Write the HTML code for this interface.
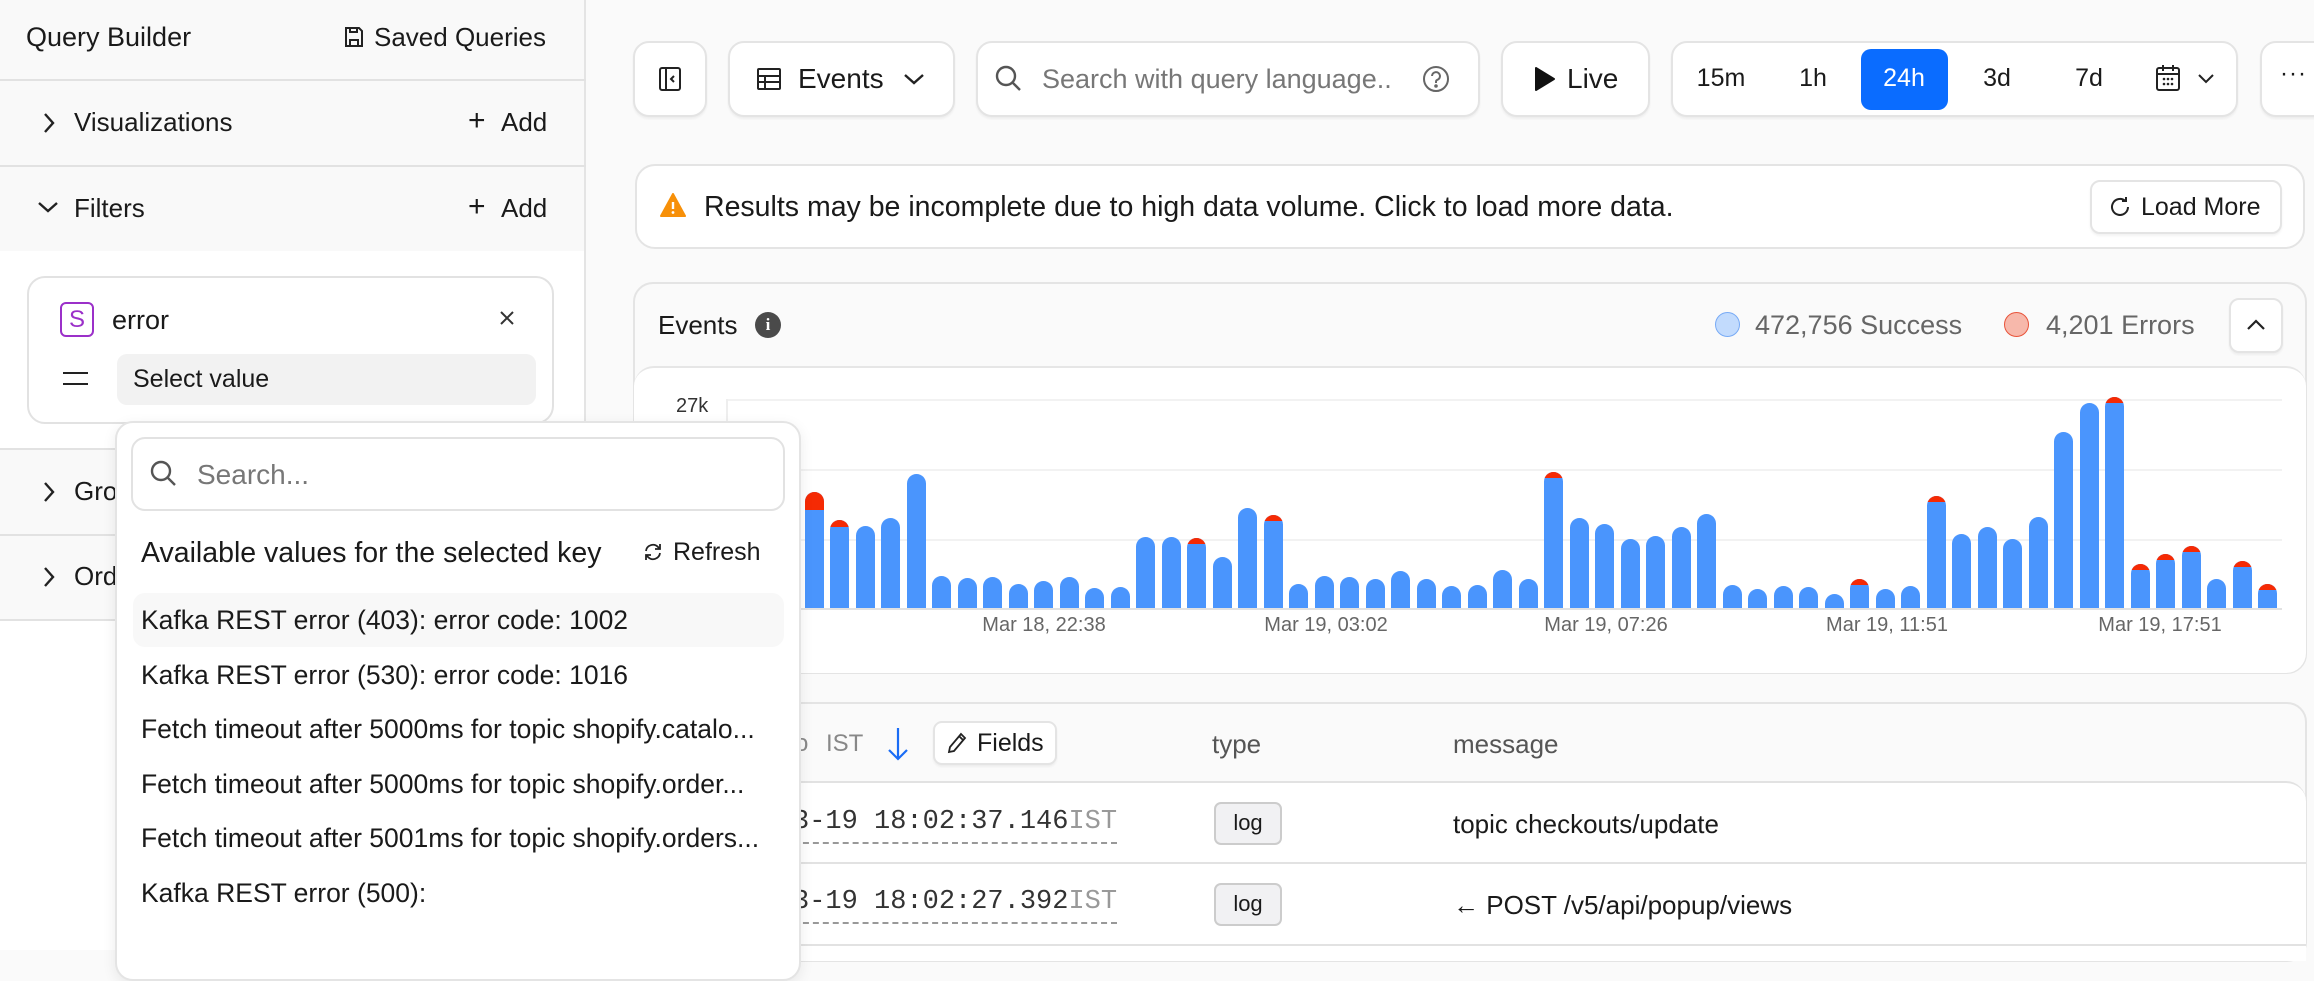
<!DOCTYPE html>
<html><head><meta charset="utf-8">
<style>
*{box-sizing:border-box;margin:0;padding:0}
body{width:2314px;height:950px;overflow:hidden;background:#fafafa;font-family:"Liberation Sans",sans-serif;color:#1a1a1a;position:relative}
.a{position:absolute}
.btn{position:absolute;background:#fff;border:2px solid #e4e4e4;border-radius:16px;box-shadow:0 2px 2px rgba(0,0,0,.05)}
.t{position:absolute;white-space:nowrap;line-height:1}
.hl{position:absolute;left:0;width:586px;height:2px;background:#e2e2e2}
.b{position:absolute;width:19px;background:#4a95fd;border-radius:10px 10px 0 0;overflow:hidden}
.b i{position:absolute;left:0;top:0;width:100%;background:#f52a04}
.xl{position:absolute;top:614px;font-size:20px;color:#666;transform:translateX(-50%);white-space:nowrap}
.mono{font-family:"Liberation Mono",monospace}
</style></head><body>

<!-- Sidebar -->
<div class="a" style="left:0;top:0;width:586px;height:950px;background:#fff;border-right:2px solid #e4e4e4"></div>
<div class="a" style="left:0;top:0;width:584px;height:251px;background:#f9f9f9"></div>
<div class="a" style="left:0;top:449px;width:584px;height:171px;background:#f9f9f9"></div>
<div class="hl" style="top:79px"></div>
<div class="hl" style="top:165px"></div>
<div class="hl" style="top:448px"></div>
<div class="hl" style="top:534px"></div>
<div class="hl" style="top:619px"></div>
<div class="t" style="left:26px;top:24px;font-size:27px">Query Builder</div>
<svg class="a" style="left:344px;top:26px" width="20" height="22" viewBox="0 0 20 22" fill="none" stroke="#222" stroke-width="2"><path d="M2 2h13l3 3v15H2z"/><path d="M6 20v-6h8v6M6 2v4h7V2"/></svg>
<div class="t" style="left:374px;top:24px;font-size:26px">Saved Queries</div>
<svg class="a" style="left:42px;top:111px" width="14" height="24" viewBox="0 0 14 24" fill="none" stroke="#222" stroke-width="2.4"><path d="M3 3l8 9-8 9"/></svg>
<div class="t" style="left:74px;top:109px;font-size:26px">Visualizations</div>
<div class="t" style="left:468px;top:106px;font-size:30px;font-weight:300">+</div>
<div class="t" style="left:501px;top:109px;font-size:26px">Add</div>
<svg class="a" style="left:36px;top:200px" width="24" height="14" viewBox="0 0 24 14" fill="none" stroke="#222" stroke-width="2.4"><path d="M3 3l9 8 9-8"/></svg>
<div class="t" style="left:74px;top:195px;font-size:26px">Filters</div>
<div class="t" style="left:468px;top:192px;font-size:30px;font-weight:300">+</div>
<div class="t" style="left:501px;top:195px;font-size:26px">Add</div>
<!-- filter card -->
<div class="a" style="left:27px;top:276px;width:527px;height:148px;border:2px solid #e2e2e2;border-radius:18px;background:#fff"></div>
<div class="a" style="left:60px;top:302px;width:34px;height:35px;border:2px solid #9b30c9;border-radius:6px;color:#9b30c9;font-size:24px;text-align:center;line-height:31px">S</div>
<div class="t" style="left:112px;top:307px;font-size:27px">error</div>
<svg class="a" style="left:499px;top:310px" width="16" height="16" viewBox="0 0 16 16" stroke="#333" stroke-width="2"><path d="M2 2l12 12M14 2L2 14"/></svg>
<div class="a" style="left:63px;top:372px;width:25px;height:2px;background:#222"></div>
<div class="a" style="left:63px;top:383px;width:25px;height:2px;background:#222"></div>
<div class="a" style="left:117px;top:354px;width:419px;height:51px;border-radius:10px;background:#f2f2f2"></div>
<div class="t" style="left:133px;top:367px;font-size:25px">Select value</div>
<svg class="a" style="left:42px;top:480px" width="14" height="24" viewBox="0 0 14 24" fill="none" stroke="#222" stroke-width="2.4"><path d="M3 3l8 9-8 9"/></svg>
<div class="t" style="left:74px;top:478px;font-size:26px">Gro</div>
<svg class="a" style="left:42px;top:565px" width="14" height="24" viewBox="0 0 14 24" fill="none" stroke="#222" stroke-width="2.4"><path d="M3 3l8 9-8 9"/></svg>
<div class="t" style="left:74px;top:563px;font-size:26px">Ord</div>

<!-- Toolbar -->
<div class="btn" style="left:633px;top:41px;width:74px;height:76px"></div>
<svg class="a" style="left:659px;top:67px" width="22" height="24" viewBox="0 0 22 24" fill="none" stroke="#222" stroke-width="2"><rect x="1" y="1" width="20" height="22" rx="2"/><path d="M7 1v22M15 9l-3 3 3 3"/></svg>
<div class="btn" style="left:728px;top:41px;width:227px;height:76px"></div>
<svg class="a" style="left:757px;top:68px" width="24" height="22" viewBox="0 0 24 22" fill="none" stroke="#222" stroke-width="2"><rect x="1" y="1" width="22" height="20" rx="1"/><path d="M1 8h22M1 14h22M8 8v13"/></svg>
<div class="t" style="left:798px;top:65px;font-size:28px">Events</div>
<svg class="a" style="left:902px;top:72px" width="24" height="14" viewBox="0 0 24 14" fill="none" stroke="#222" stroke-width="2.4"><path d="M3 3l9 8 9-8"/></svg>
<div class="btn" style="left:976px;top:41px;width:504px;height:76px"></div>
<svg class="a" style="left:994px;top:64px" width="30" height="30" viewBox="0 0 30 30" fill="none" stroke="#555" stroke-width="2.4"><circle cx="12" cy="12" r="9"/><path d="M19 19l7 7"/></svg>
<div class="t" style="left:1042px;top:66px;font-size:27px;color:#777">Search with query language..</div>
<svg class="a" style="left:1422px;top:65px" width="28" height="28" viewBox="0 0 28 28" fill="none" stroke="#666" stroke-width="2"><circle cx="14" cy="14" r="12"/><path d="M10 11a4 4 0 1 1 5 4c-1 .5-1 1-1 3"/><circle cx="14" cy="21" r=".8" fill="#666"/></svg>
<div class="btn" style="left:1501px;top:41px;width:149px;height:76px"></div>
<svg class="a" style="left:1534px;top:66px" width="22" height="26" viewBox="0 0 22 26"><path d="M2 2l18 11L2 24z" fill="#111" stroke="#111" stroke-width="2" stroke-linejoin="round"/></svg>
<div class="t" style="left:1567px;top:65px;font-size:28px">Live</div>
<div class="btn" style="left:1671px;top:41px;width:567px;height:76px"></div>
<div class="a" style="left:1861px;top:49px;width:87px;height:61px;border-radius:10px;background:#0a6cff"></div>
<div class="t" style="left:1721px;top:66px;font-size:25px;transform:translateX(-50%)">15m</div>
<div class="t" style="left:1813px;top:66px;font-size:25px;transform:translateX(-50%)">1h</div>
<div class="t" style="left:1904px;top:66px;font-size:25px;transform:translateX(-50%);color:#fff">24h</div>
<div class="t" style="left:1997px;top:66px;font-size:25px;transform:translateX(-50%)">3d</div>
<div class="t" style="left:2089px;top:66px;font-size:25px;transform:translateX(-50%)">7d</div>
<svg class="a" style="left:2156px;top:64px" width="24" height="28" viewBox="0 0 24 28" fill="none" stroke="#222" stroke-width="2"><rect x="1" y="4" width="22" height="22" rx="2"/><path d="M1 10h22M7 1v6M17 1v6"/><g fill="#222" stroke="none"><circle cx="8" cy="15" r="1.3"/><circle cx="12" cy="15" r="1.3"/><circle cx="16" cy="15" r="1.3"/><circle cx="8" cy="20" r="1.3"/><circle cx="12" cy="20" r="1.3"/><circle cx="16" cy="20" r="1.3"/></g></svg>
<svg class="a" style="left:2197px;top:73px" width="18" height="11" viewBox="0 0 18 11" fill="none" stroke="#222" stroke-width="2"><path d="M2 2l7 7 7-7"/></svg>
<div class="btn" style="left:2260px;top:41px;width:80px;height:76px"></div>
<div class="t" style="left:2280px;top:62px;font-size:24px;letter-spacing:1px">···</div>

<!-- Alert -->
<div class="btn" style="left:635px;top:164px;width:1670px;height:85px;border-radius:20px;box-shadow:none"></div>
<svg class="a" style="left:660px;top:193px" width="26" height="24" viewBox="0 0 26 24"><path d="M13 1L25 23H1z" fill="#f79009" stroke="#f79009" stroke-width="2" stroke-linejoin="round"/><path d="M13 9v7" stroke="#fff" stroke-width="2.4"/><circle cx="13" cy="19.5" r="1.4" fill="#fff"/></svg>
<div class="t" style="left:704px;top:193px;font-size:28.5px">Results may be incomplete due to high data volume. Click to load more data.</div>
<div class="btn" style="left:2090px;top:180px;width:192px;height:54px;border-radius:10px"></div>
<svg class="a" style="left:2109px;top:196px" width="22" height="22" viewBox="0 0 22 22" fill="none" stroke="#222" stroke-width="2"><path d="M19 11a8 8 0 1 1-3-6.3"/><path d="M17 1v4h-4"/></svg>
<div class="t" style="left:2141px;top:195px;font-size:25px">Load More</div>

<!-- Events card -->
<div class="a" style="left:633px;top:282px;width:1674px;height:392px;border:2px solid #e4e4e4;border-radius:20px;background:#fafafa"></div>
<div class="t" style="left:658px;top:312px;font-size:26px">Events</div>
<div class="a" style="left:755px;top:312px;width:26px;height:26px;border-radius:50%;background:#4a4a4a;color:#fff;font-size:17px;font-weight:bold;text-align:center;line-height:26px;font-family:'Liberation Serif',serif">i</div>
<div class="a" style="left:1715px;top:312px;width:25px;height:25px;border-radius:50%;background:#c2dbfd;border:1.5px solid #77aaf5"></div>
<div class="t" style="left:1755px;top:312px;font-size:27px;color:#666">472,756 Success</div>
<div class="a" style="left:2004px;top:312px;width:25px;height:25px;border-radius:50%;background:#f7b8ab;border:1.5px solid #e8533a"></div>
<div class="t" style="left:2046px;top:312px;font-size:27px;color:#666">4,201 Errors</div>
<div class="btn" style="left:2229px;top:298px;width:54px;height:55px;border-radius:10px"></div>
<svg class="a" style="left:2246px;top:318px" width="20" height="13" viewBox="0 0 20 13" fill="none" stroke="#222" stroke-width="2.2"><path d="M2 11l8-8 8 8"/></svg>
<div class="a" style="left:634px;top:366px;width:1672px;height:307px;border-top:2px solid #e6e6e6;border-radius:20px;background:#fff"></div>
<div class="t" style="left:676px;top:396px;font-size:20px;color:#333">27k</div>
<div class="a" style="left:726px;top:399px;width:1556px;height:2px;background:#f2f2f2"></div>
<div class="a" style="left:726px;top:469px;width:1556px;height:2px;background:#f2f2f2"></div>
<div class="a" style="left:726px;top:539px;width:1556px;height:2px;background:#f2f2f2"></div>
<div class="a" style="left:726px;top:399px;width:2px;height:210px;background:#eee"></div>

<div class="b" style="left:728px;top:540px;height:69px"></div>
<div class="b" style="left:754px;top:530px;height:79px"></div>
<div class="b" style="left:779px;top:520px;height:89px"></div>
<div class="b" style="left:805px;top:492px;height:117px"><i style="height:18px"></i></div>
<div class="b" style="left:830px;top:520px;height:89px"><i style="height:7px"></i></div>
<div class="b" style="left:856px;top:526px;height:83px"></div>
<div class="b" style="left:881px;top:518px;height:91px"></div>
<div class="b" style="left:907px;top:474px;height:135px"></div>
<div class="b" style="left:932px;top:576px;height:33px"></div>
<div class="b" style="left:958px;top:578px;height:31px"></div>
<div class="b" style="left:983px;top:577px;height:32px"></div>
<div class="b" style="left:1009px;top:584px;height:25px"></div>
<div class="b" style="left:1034px;top:581px;height:28px"></div>
<div class="b" style="left:1060px;top:577px;height:32px"></div>
<div class="b" style="left:1085px;top:588px;height:21px"></div>
<div class="b" style="left:1111px;top:587px;height:22px"></div>
<div class="b" style="left:1136px;top:537px;height:72px"></div>
<div class="b" style="left:1162px;top:537px;height:72px"></div>
<div class="b" style="left:1187px;top:538px;height:71px"><i style="height:6px"></i></div>
<div class="b" style="left:1213px;top:557px;height:52px"></div>
<div class="b" style="left:1238px;top:508px;height:101px"></div>
<div class="b" style="left:1264px;top:515px;height:94px"><i style="height:6px"></i></div>
<div class="b" style="left:1289px;top:584px;height:25px"></div>
<div class="b" style="left:1315px;top:576px;height:33px"></div>
<div class="b" style="left:1340px;top:577px;height:32px"></div>
<div class="b" style="left:1366px;top:579px;height:30px"></div>
<div class="b" style="left:1391px;top:571px;height:38px"></div>
<div class="b" style="left:1417px;top:579px;height:30px"></div>
<div class="b" style="left:1442px;top:586px;height:23px"></div>
<div class="b" style="left:1468px;top:585px;height:24px"></div>
<div class="b" style="left:1493px;top:570px;height:39px"></div>
<div class="b" style="left:1519px;top:579px;height:30px"></div>
<div class="b" style="left:1544px;top:472px;height:137px"><i style="height:6px"></i></div>
<div class="b" style="left:1570px;top:518px;height:91px"></div>
<div class="b" style="left:1595px;top:524px;height:85px"></div>
<div class="b" style="left:1621px;top:539px;height:70px"></div>
<div class="b" style="left:1646px;top:536px;height:73px"></div>
<div class="b" style="left:1672px;top:527px;height:82px"></div>
<div class="b" style="left:1697px;top:514px;height:95px"></div>
<div class="b" style="left:1723px;top:585px;height:24px"></div>
<div class="b" style="left:1748px;top:589px;height:20px"></div>
<div class="b" style="left:1774px;top:586px;height:23px"></div>
<div class="b" style="left:1799px;top:587px;height:22px"></div>
<div class="b" style="left:1825px;top:594px;height:15px"></div>
<div class="b" style="left:1850px;top:579px;height:30px"><i style="height:6px"></i></div>
<div class="b" style="left:1876px;top:589px;height:20px"></div>
<div class="b" style="left:1901px;top:586px;height:23px"></div>
<div class="b" style="left:1927px;top:496px;height:113px"><i style="height:6px"></i></div>
<div class="b" style="left:1952px;top:534px;height:75px"></div>
<div class="b" style="left:1978px;top:527px;height:82px"></div>
<div class="b" style="left:2003px;top:539px;height:70px"></div>
<div class="b" style="left:2029px;top:517px;height:92px"></div>
<div class="b" style="left:2054px;top:432px;height:177px"></div>
<div class="b" style="left:2080px;top:403px;height:206px"></div>
<div class="b" style="left:2105px;top:397px;height:212px"><i style="height:6px"></i></div>
<div class="b" style="left:2131px;top:564px;height:45px"><i style="height:6px"></i></div>
<div class="b" style="left:2156px;top:554px;height:55px"><i style="height:6px"></i></div>
<div class="b" style="left:2182px;top:546px;height:63px"><i style="height:6px"></i></div>
<div class="b" style="left:2207px;top:579px;height:30px"></div>
<div class="b" style="left:2233px;top:561px;height:48px"><i style="height:6px"></i></div>
<div class="b" style="left:2258px;top:584px;height:25px"><i style="height:6px"></i></div>

<div class="a" style="left:726px;top:608px;width:1556px;height:2px;background:#e2e2e2"></div>
<div class="xl" style="left:1044px">Mar 18, 22:38</div>
<div class="xl" style="left:1326px">Mar 19, 03:02</div>
<div class="xl" style="left:1606px">Mar 19, 07:26</div>
<div class="xl" style="left:1887px">Mar 19, 11:51</div>
<div class="xl" style="left:2160px">Mar 19, 17:51</div>

<!-- Table -->
<div class="a" style="left:633px;top:702px;width:1674px;height:260px;border:2px solid #e4e4e4;border-radius:20px;background:#fafafa"></div>
<div class="a" style="left:634px;top:781px;width:1672px;height:180px;background:#fff;border-top:2px solid #e2e2e2;border-radius:20px 20px 0 0"></div>
<div class="a" style="left:634px;top:862px;width:1672px;height:2px;background:#e2e2e2"></div>
<div class="a" style="left:634px;top:944px;width:1672px;height:2px;background:#e2e2e2"></div>
<div class="t" style="left:795px;top:732px;font-size:24px;color:#888">o</div>
<div class="t" style="left:826px;top:732px;font-size:24px;color:#888">IST</div>
<svg class="a" style="left:886px;top:726px" width="24" height="36" viewBox="0 0 24 36" fill="none" stroke="#1a6cf5" stroke-width="2.2"><path d="M12 2v31M3 24l9 9 9-9"/></svg>
<div class="btn" style="left:933px;top:721px;width:124px;height:44px;border-radius:9px"></div>
<svg class="a" style="left:947px;top:732px" width="20" height="22" viewBox="0 0 20 22" fill="none" stroke="#222" stroke-width="1.8"><path d="M14 2l4 4L7 19l-5 1 1-5z M12 4l4 4"/></svg>
<div class="t" style="left:977px;top:731px;font-size:25px">Fields</div>
<div class="t" style="left:1212px;top:731px;font-size:26px;color:#555">type</div>
<div class="t" style="left:1453px;top:731px;font-size:26px;color:#555">message</div>
<div class="t mono" style="left:793px;top:809px;font-size:27px;color:#333;border-bottom:2px dashed #999;padding-bottom:6px">3-19 18:02:37.146<span style="color:#999">IST</span></div>
<div class="a" style="left:1214px;top:802px;width:68px;height:43px;border:2px solid #ccc;border-radius:7px;background:#f1f1f3;font-size:22px;text-align:center;line-height:38px">log</div>
<div class="t" style="left:1453px;top:811px;font-size:26px">topic checkouts/update</div>
<div class="t mono" style="left:793px;top:889px;font-size:27px;color:#333;border-bottom:2px dashed #999;padding-bottom:6px">3-19 18:02:27.392<span style="color:#999">IST</span></div>
<div class="a" style="left:1214px;top:883px;width:68px;height:43px;border:2px solid #ccc;border-radius:7px;background:#f1f1f3;font-size:22px;text-align:center;line-height:38px">log</div>
<div class="t" style="left:1453px;top:892px;font-size:26px">← POST /v5/api/popup/views</div>

<!-- Popover -->
<div class="a" style="left:115px;top:421px;width:686px;height:560px;background:#fff;border:2px solid #e4e4e4;border-radius:18px;box-shadow:0 4px 14px rgba(0,0,0,.08)"></div>
<div class="a" style="left:131px;top:437px;width:654px;height:74px;border:2px solid #e2e2e2;border-radius:14px;background:#fff"></div>
<svg class="a" style="left:149px;top:459px" width="30" height="30" viewBox="0 0 30 30" fill="none" stroke="#555" stroke-width="2.4"><circle cx="12" cy="12" r="9"/><path d="M19 19l7 7"/></svg>
<div class="t" style="left:197px;top:461px;font-size:28px;color:#777">Search...</div>
<div class="t" style="left:141px;top:539px;font-size:28.5px">Available values for the selected key</div>
<svg class="a" style="left:643px;top:542px" width="20" height="20" viewBox="0 0 20 20" fill="none" stroke="#222" stroke-width="1.8"><path d="M3 9a7 7 0 0 1 12-4l2 2M17 11a7 7 0 0 1-12 4l-2-2"/><path d="M17 2v5h-5M3 18v-5h5"/></svg>
<div class="t" style="left:673px;top:540px;font-size:25px">Refresh</div>
<div class="a" style="left:133px;top:593px;width:651px;height:54px;border-radius:12px;background:#f8f8f8"></div>
<div class="t" style="left:141px;top:607px;font-size:26.5px">Kafka REST error (403): error code: 1002</div>
<div class="t" style="left:141px;top:662px;font-size:26.5px">Kafka REST error (530): error code: 1016</div>
<div class="t" style="left:141px;top:716px;font-size:26.5px">Fetch timeout after 5000ms for topic shopify.catalo...</div>
<div class="t" style="left:141px;top:771px;font-size:26.5px">Fetch timeout after 5000ms for topic shopify.order...</div>
<div class="t" style="left:141px;top:825px;font-size:26.5px">Fetch timeout after 5001ms for topic shopify.orders...</div>
<div class="t" style="left:141px;top:880px;font-size:26.5px">Kafka REST error (500):</div>
</body></html>
